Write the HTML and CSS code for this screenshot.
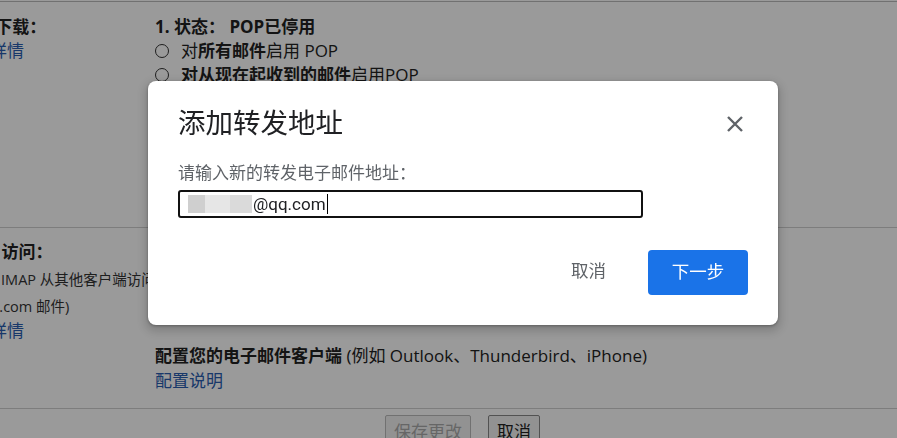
FILE: index.html
```html
<!DOCTYPE html>
<html lang="zh-CN">
<head>
  <meta charset="UTF-8">
  <title>转发和 POP/IMAP</title>
  <link rel="stylesheet" href="styles.css">
</head>
<body>

<div class="settings">
  <!-- POP -->
  <div class="row row-pop">
    <div class="col-left">
      <div class="heading">POP 下载：</div>
      <a class="link">了解详情</a>
    </div>
    <div class="col-right">
      <div class="heading">1. 状态： POP已停用</div>
      <label class="radio"><span class="dot"></span>对<b>所有邮件</b>启用 POP</label>
      <label class="radio"><span class="dot"></span><b>对从现在起收到的邮件</b>启用POP</label>
      <div class="heading">2. 用 POP 访问邮件后</div>
      <div class="heading">3. 配置您的电子邮件客户端</div>
    </div>
  </div>

  <!-- IMAP -->
  <div class="row row-imap">
    <div class="col-left">
      <div class="heading">IMAP 访问：</div>
      <div class="note">(使用 IMAP 从其他客户端访问<br>Gmail.com 邮件)</div>
      <a class="link">了解详情</a>
    </div>
    <div class="col-right">
      <div class="heading">状态：IMAP 已停用</div>
      <label class="radio"><span class="dot"></span>启用 IMAP</label>
      <label class="radio"><span class="dot"></span>停用 IMAP</label>
      <div class="client"><b>配置您的电子邮件客户端</b> (例如 Outlook、Thunderbird、iPhone)</div>
      <a class="link">配置说明</a>
    </div>
  </div>

  <div class="actions">
    <button class="btn-plain" disabled>保存更改</button>
    <button class="btn-plain">取消</button>
  </div>
</div>

<div class="overlay"></div>

<!-- DIALOG -->
<div class="dialog">
  <div class="dialog-head">
    <h2>添加转发地址</h2>
    <span class="close">
      <svg width="20" height="20" viewBox="0 0 20 20">
        <path d="M3 3 L17 17 M17 3 L3 17" stroke="#5f6368" stroke-width="2.4" fill="none"/>
      </svg>
    </span>
  </div>
  <div class="field-label">请输入新的转发电子邮件地址：</div>
  <div class="field">
    <span class="blur b1"></span><span class="blur b2"></span><span class="blur b3"></span>
    <span class="value">@qq.com</span><span class="caret"></span>
  </div>
  <div class="dialog-actions">
    <button class="btn-cancel">取消</button>
    <button class="btn-next">下一步</button>
  </div>
</div>

</body>
</html>
```

FILE: styles.css
```css
body {
  margin: 0;
  font-family: Roboto, "Liberation Sans", "Noto Sans CJK SC", sans-serif;
  background: #ffffff;
  color: #222;
  width: 897px;
  height: 438px;
  overflow: hidden;
}

.settings {
  font-family: "Open Sans", "Noto Sans CJK SC", sans-serif;
  border-top: 1px solid #bbb;
  margin-left: -44px;
  margin-top: 1px;
}

.row {
  display: grid;
  grid-template-columns: 191px 1fr;
  column-gap: 8px;
  border-bottom: 1px solid #cfcfcf;
  box-sizing: border-box;
}

.row-pop {
  height: 226px;
  padding-top: 13px;
}

.row-imap {
  height: 181px;
  padding-top: 12px;
}

.heading {
  font-size: 17px;
  font-weight: bold;
  line-height: 24px;
}

.link {
  display: block;
  color: #2a5db0;
  font-size: 17px;
  line-height: 24px;
}

.radio {
  display: flex;
  align-items: center;
  font-size: 17px;
  line-height: 24px;
}

.dot {
  width: 12px;
  height: 12px;
  border: 1px solid #333;
  border-radius: 50%;
  margin-right: 12px;
}

.note {
  font-size: 14.5px;
  line-height: 27px;
  color: #333;
  margin-top: 2px;
  margin-left: 4px;
  text-indent: 4px;
  white-space: nowrap;
}

.row-imap .heading {
  margin-left: -3px;
}

.row-imap .col-left .link {
  margin-top: -1px;
}

.row-imap .col-right .heading,
.row-imap .col-right .radio {
  visibility: hidden;
}

.client {
  font-size: 17px;
  line-height: 26px;
  margin-top: 31px;
}

.actions {
  display: flex;
  gap: 17px;
  padding: 6px 0 0 429px;
}

.btn-plain {
  font-family: inherit;
  font-size: 17px;
  padding: 2px 8px;
  background: #f2f2f2;
  border: 1px solid #888;
  border-radius: 2px;
  color: #222;
  height: 30px;
}

.btn-plain:disabled {
  color: #aaa;
  border-color: #bbb;
}

.overlay {
  position: fixed;
  inset: 0;
  background: rgba(0, 0, 0, 0.395);
}

.dialog {
  position: absolute;
  left: 148px;
  top: 81px;
  width: 630px;
  height: 244px;
  box-sizing: border-box;
  padding: 27px 30px 30px 30px;
  background: #fff;
  border-radius: 8px;
  box-shadow: 0 4px 8px 3px rgba(0, 0, 0, 0.15), 0 1px 3px rgba(0, 0, 0, 0.3);
  display: flex;
  flex-direction: column;
}

.dialog-head {
  display: flex;
  justify-content: space-between;
  align-items: center;
}

.dialog-head h2 {
  margin: 0;
  font-size: 27.5px;
  font-weight: normal;
  line-height: 32px;
  color: #202124;
}

.close {
  display: flex;
  margin-right: 3px;
}

.field-label {
  margin-top: 22px;
  font-size: 17px;
  line-height: 22px;
  color: #5f6368;
}

.field {
  margin-top: 6px;
  width: 465px;
  height: 28px;
  box-sizing: border-box;
  border: 2px solid #111;
  border-radius: 3px;
  display: flex;
  align-items: center;
  padding-left: 8px;
}

.blur {
  height: 18px;
}

.b1 { width: 17px; background: #cfcfcf; }
.b2 { width: 25px; background: #e6e6e6; }
.b3 { width: 22px; background: #dadada; }

.value {
  font-size: 17px;
  color: #202124;
  margin-left: 1px;
}

.caret {
  width: 1px;
  height: 20px;
  background: #000;
  margin-left: 1px;
}

.dialog-actions {
  margin-top: auto;
  display: flex;
  justify-content: flex-end;
  align-items: center;
  gap: 22px;
}

.btn-cancel {
  font-family: inherit;
  font-size: 17.5px;
  color: #5f6368;
  background: none;
  border: none;
  padding: 6px 20px 12px;
}

.btn-next {
  font-family: inherit;
  font-size: 17.5px;
  color: #fff;
  background: #1a73e8;
  border: none;
  border-radius: 4px;
  width: 100px;
  height: 45px;
  padding-bottom: 5px;
}
```
